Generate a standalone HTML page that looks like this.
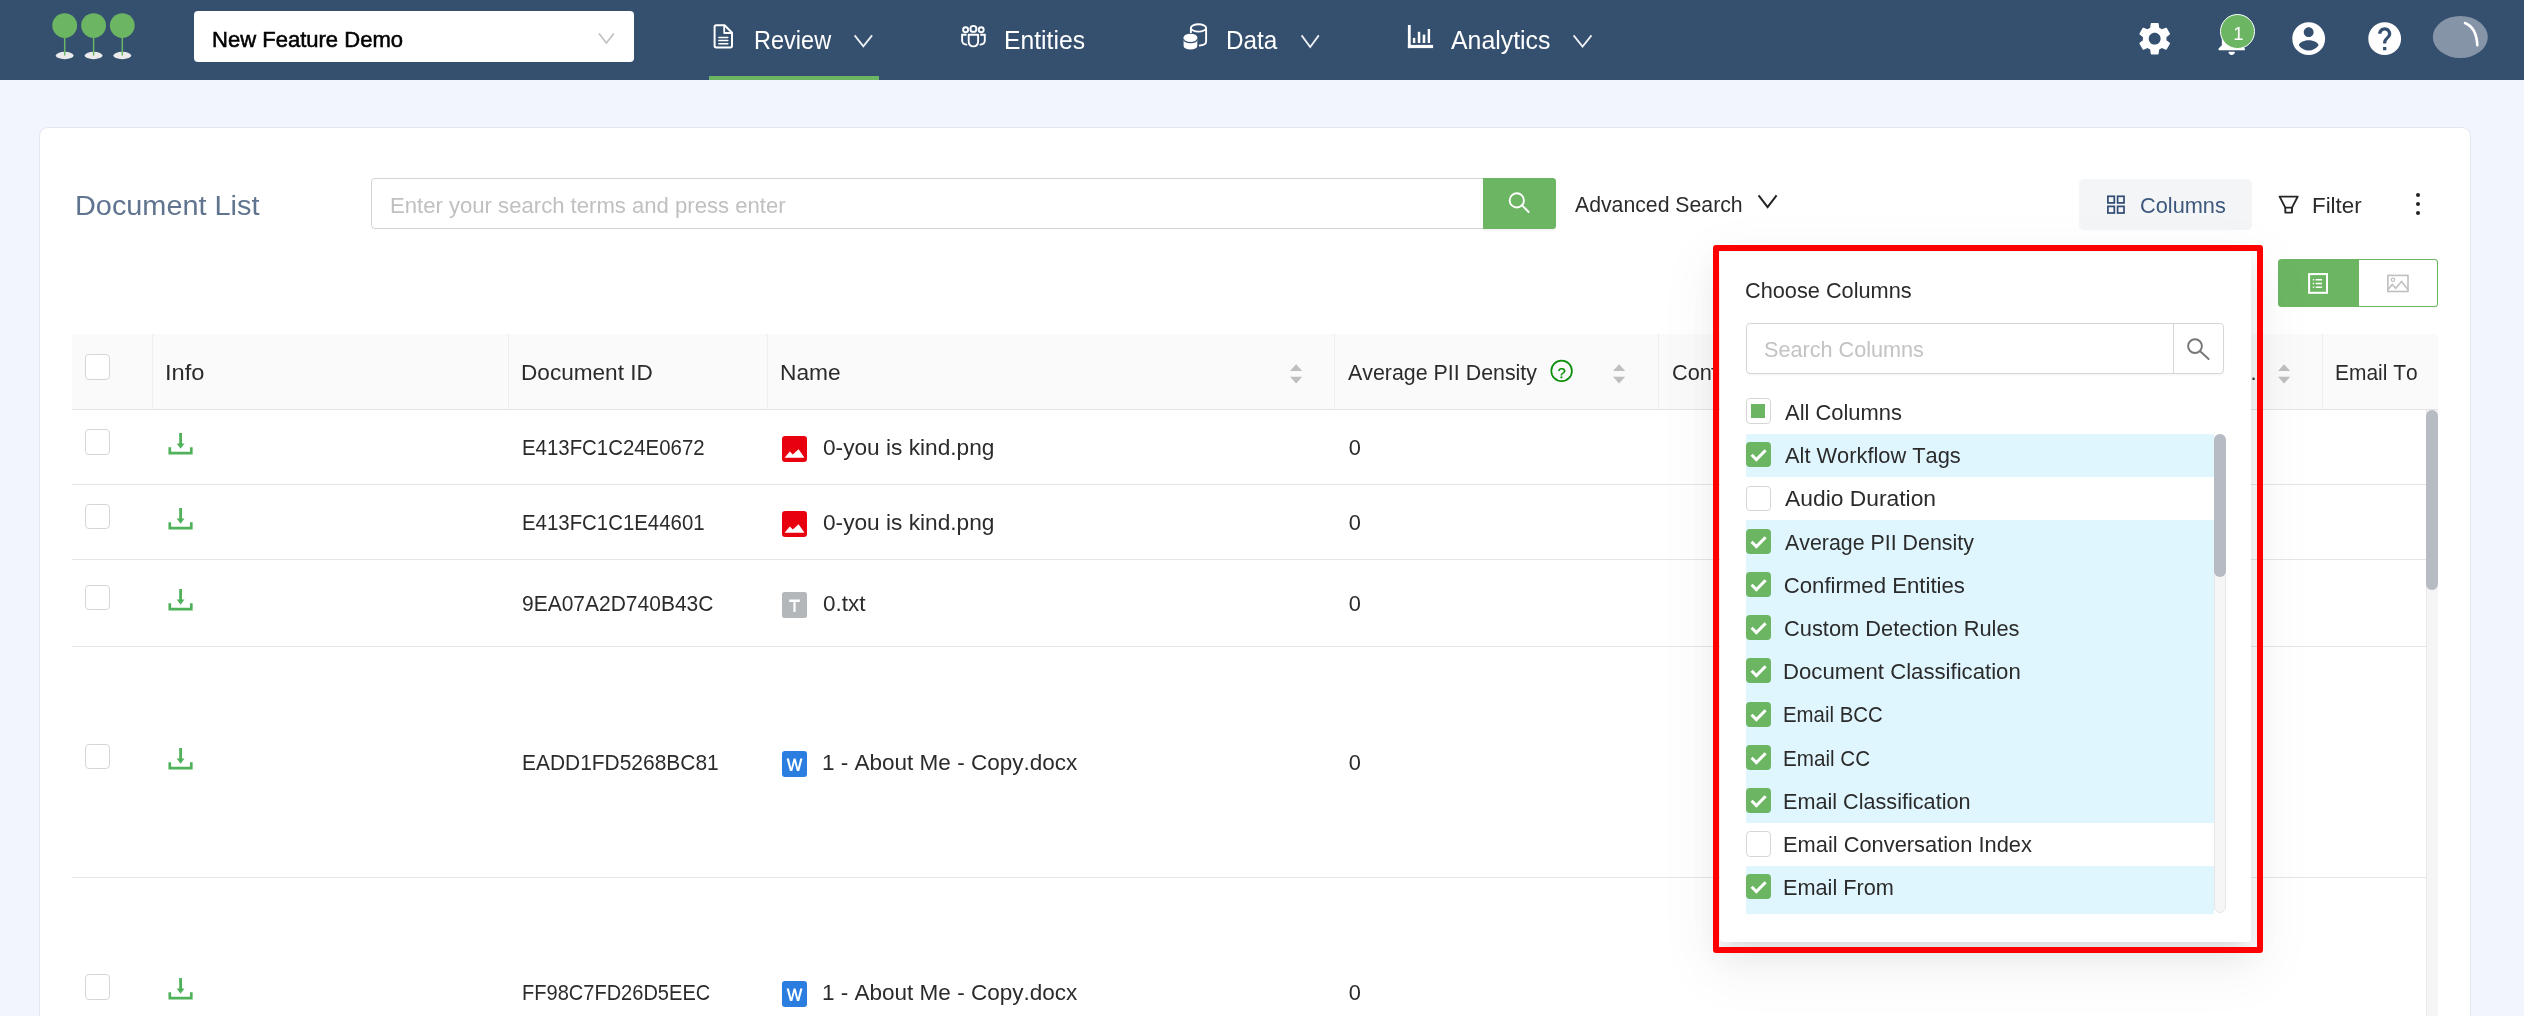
<!DOCTYPE html>
<html><head><meta charset="utf-8"><title>Document List</title>
<style>
html,body{margin:0;padding:0;}
body{width:2524px;height:1016px;overflow:hidden;background:#f2f5fe;position:relative;font-family:"Liberation Sans",sans-serif;font-kerning:none;}
.a{position:absolute;}
.t{position:absolute;white-space:pre;line-height:1;transform-origin:0 0;font-family:"Liberation Sans",sans-serif;}
svg{position:absolute;overflow:visible;}
.cb{position:absolute;width:23px;height:23.6px;border:1px solid #d6d6d6;border-radius:4px;background:#fff;}
.cbk{position:absolute;width:25px;height:25px;border-radius:4px;background:#6cb663;}
.hl{position:absolute;left:0;width:468px;height:43.2px;background:#e0f6fe;}
.rl{position:absolute;left:72px;width:2354px;height:1px;background:#e6e6e6;}
.cs{position:absolute;top:334px;width:1px;height:75px;background:#f2eded;}
</style></head><body><div id="root" style="position:absolute;left:0;top:0;width:2524px;height:1016px;will-change:transform;">

<div class="a" style="left:0;top:0;width:2524px;height:80px;background:#35506f;"></div>
<svg style="left:40px;top:8px" width="110" height="60" viewBox="40 8 110 60"><ellipse cx="64.7" cy="55.5" rx="8.9" ry="3.7" fill="#ebebeb"/><rect x="63.95" y="36" width="1.5" height="19.5" fill="#6cb663"/><circle cx="64.7" cy="25.6" r="12.4" fill="#6cb663"/><ellipse cx="93.6" cy="55.5" rx="8.9" ry="3.7" fill="#ebebeb"/><rect x="92.85" y="36" width="1.5" height="19.5" fill="#6cb663"/><circle cx="93.6" cy="25.6" r="12.4" fill="#6cb663"/><ellipse cx="122.3" cy="55.5" rx="8.9" ry="3.7" fill="#ebebeb"/><rect x="121.55" y="36" width="1.5" height="19.5" fill="#6cb663"/><circle cx="122.3" cy="25.6" r="12.4" fill="#6cb663"/></svg>
<div class="a" style="left:194px;top:11px;width:440px;height:51px;background:#fff;border-radius:4px;"></div>
<span class="t " style="left:212.24px;top:29.17px;font-size:22.6px;color:#000;transform:scaleX(0.9751);-webkit-text-stroke:0.55px #000;">New Feature Demo</span>
<svg style="left:596px;top:30px" width="22" height="18" viewBox="596 30 22 18"><path d="M599 33.6 L606.4 43 L613.8 33.6" fill="none" stroke="#bfbfbf" stroke-width="1.6"/></svg>
<div class="a" style="left:709px;top:76px;width:170px;height:4px;background:#6cb663;"></div>
<svg style="left:712px;top:23px" width="23" height="27" viewBox="712 23 23 27" fill="none" stroke="#fff" stroke-width="2" stroke-linejoin="round" stroke-linecap="round">
<path d="M716.2 25.3 H724.6 L732 32.7 V45.8 Q732 47.4 730.4 47.4 H716.2 Q714.6 47.4 714.6 45.8 V26.9 Q714.6 25.3 716.2 25.3 Z"/>
<path d="M724.2 25.8 V33 H731.5" stroke-width="1.8"/>
<path d="M718.8 37.5 H727.8 M718.8 40.6 H727.8 M718.8 43.7 H727.8" stroke-width="1.5"/>
</svg>
<span class="t " style="left:753.62px;top:27.94px;font-size:25px;color:#fff;transform:scaleX(0.9407);">Review</span>
<svg style="left:850.5px;top:32.3px" width="24.700000000000045" height="18.400000000000006" viewBox="850.5 32.3 24.700000000000045 18.400000000000006"><path d="M854.1 35.699999999999996 L862.85 46.7 L871.6 35.699999999999996" fill="none" stroke="#eef1f5" stroke-width="1.8"/></svg>
<svg style="left:959px;top:23px" width="30" height="28" viewBox="959 23 30 28" fill="none" stroke="#fff" stroke-width="1.9" stroke-linecap="round">
<circle cx="965.6" cy="29.8" r="2.5"/><circle cx="973.4" cy="28.9" r="3"/><circle cx="981.2" cy="29.8" r="2.5"/>
<path d="M968.7 34.7 H978.1 V41.3 Q978.1 46.4 973.4 46.4 Q968.7 46.4 968.7 41.3 Z" stroke-linejoin="round"/>
<path d="M965.8 34.7 H962.1 V40.3 Q962.1 44.4 966.4 44.6"/>
<path d="M981 34.7 H984.8 V40.3 Q984.8 44.4 980.4 44.6"/>
</svg>
<span class="t " style="left:1003.82px;top:27.94px;font-size:25px;color:#fff;transform:scaleX(0.9885);">Entities</span>
<svg style="left:1181px;top:21px" width="30" height="32" viewBox="1181 21 30 32">
<g fill="none" stroke="#fff" stroke-width="1.9">
<ellipse cx="1198.5" cy="27.9" rx="7.6" ry="3.7"/>
<path d="M1206.1 27.9 V41.5 Q1206.1 45.2 1199 45.6"/>
<path d="M1190.9 27.9 V33"/>
</g>
<path d="M1183.6 37.6 V46 A6.85 3.6 0 0 0 1197.3 46 V37.6 Z" fill="#fff"/>
<ellipse cx="1190.45" cy="37.4" rx="6.85" ry="3.6" fill="#fff" stroke="#35506f" stroke-width="0"/>
<path d="M1183.6 39.3 A6.85 3.3 0 0 0 1197.3 39.3" fill="none" stroke="#35506f" stroke-width="1.3"/>
</svg>
<span class="t " style="left:1225.76px;top:27.94px;font-size:25px;color:#fff;transform:scaleX(0.9716);">Data</span>
<svg style="left:1297.6px;top:32px" width="24.40000000000009" height="19" viewBox="1297.6 32 24.40000000000009 19"><path d="M1301.1999999999998 35.4 L1309.8 47 L1318.4 35.4" fill="none" stroke="#eef1f5" stroke-width="1.8"/></svg>
<svg style="left:1406px;top:23px" width="30" height="28" viewBox="1406 23 30 28" fill="#fff">
<rect x="1407.9" y="25" width="2.8" height="23.1"/><rect x="1407.9" y="44.9" width="25.2" height="3.2"/>
<rect x="1412.9" y="37.9" width="2.4" height="5.1"/><rect x="1417.8" y="31.8" width="2.5" height="11.2"/>
<rect x="1422.7" y="34.6" width="2.6" height="8.4"/><rect x="1427.7" y="29" width="2.4" height="14"/>
</svg>
<span class="t " style="left:1451.20px;top:27.94px;font-size:25px;color:#fff;transform:scaleX(0.9943);">Analytics</span>
<svg style="left:1569.9px;top:32.3px" width="25.09999999999991" height="18.6" viewBox="1569.9 32.3 25.09999999999991 18.6"><path d="M1573.5 35.699999999999996 L1582.45 46.9 L1591.4 35.699999999999996" fill="none" stroke="#eef1f5" stroke-width="1.8"/></svg>
<svg style="left:2135.2px;top:18.6px" width="39.4" height="39.4" viewBox="0 0 24 24" fill="#fff"><path d="M19.14 12.94c.04-.3.06-.61.06-.94 0-.32-.02-.64-.07-.94l2.03-1.58c.18-.14.23-.41.12-.61l-1.92-3.32c-.12-.22-.37-.29-.59-.22l-2.39.96c-.5-.38-1.03-.7-1.62-.94l-.36-2.54c-.04-.24-.24-.41-.48-.41h-3.84c-.24 0-.43.17-.47.41l-.36 2.54c-.59.24-1.13.57-1.62.94l-2.39-.96c-.22-.08-.47 0-.59.22L2.74 8.87c-.12.21-.08.47.12.61l2.03 1.58c-.05.3-.09.63-.09.94s.02.64.07.94l-2.03 1.58c-.18.14-.23.41-.12.61l1.92 3.32c.12.22.37.29.59.22l2.39-.96c.5.38 1.03.7 1.62.94l.36 2.54c.05.24.24.41.48.41h3.84c.24 0 .44-.17.47-.41l.36-2.54c.59-.24 1.13-.56 1.62-.94l2.39.96c.22.08.47 0 .59-.22l1.92-3.32c.12-.22.07-.47-.12-.61l-2.01-1.58zM12 15.6c-1.98 0-3.6-1.62-3.6-3.6s1.62-3.6 3.6-3.6 3.6 1.62 3.6 3.6-1.62 3.6-3.6 3.6z"/></svg>
<svg style="left:2211.8px;top:18.6px" width="39.4" height="39.4" viewBox="0 0 24 24" fill="#fff"><path d="M12 22c1.1 0 2-.9 2-2h-4c0 1.1.89 2 2 2zm6-6v-5c0-3.07-1.64-5.64-4.5-6.32V4c0-.83-.67-1.5-1.5-1.5s-1.5.67-1.5 1.5v.68C7.63 5.36 6 7.92 6 11v5l-2 2v1h16v-1l-2-2z"/></svg>
<div class="a" style="left:2220.1px;top:14px;width:33.2px;height:33.2px;border-radius:50%;background:#6cb663;border:1px solid #fff;"></div>
<span class="t " style="left:2233.20px;top:25.06px;font-size:18.6px;color:#fff;transform:scaleX(1.0000);">1</span>
<svg style="left:2288.7px;top:18.6px" width="39.4" height="39.4" viewBox="0 0 24 24" fill="#fff"><path d="M12 2C6.48 2 2 6.48 2 12s4.48 10 10 10 10-4.48 10-10S17.52 2 12 2zm0 3c1.66 0 3 1.34 3 3s-1.34 3-3 3-3-1.34-3-3 1.34-3 3-3zm0 14.2c-2.5 0-4.71-1.28-6-3.22.03-1.99 4-3.08 6-3.08 1.99 0 5.97 1.09 6 3.08-1.29 1.94-3.5 3.22-6 3.22z"/></svg>
<svg style="left:2365.2px;top:18.6px" width="39.4" height="39.4" viewBox="0 0 24 24" fill="#fff"><path d="M12 2C6.48 2 2 6.48 2 12s4.48 10 10 10 10-4.48 10-10S17.52 2 12 2zm1 17h-2v-2h2v2zm2.070-7.750l-.9.92C13.45 12.9 13 13.5 13 15h-2v-.5c0-1.100.45-2.100 1.170-2.830l1.240-1.260c.37-.36.59-.86.59-1.410 0-1.100-.9-2-2-2s-2 .9-2 2H8c0-2.210 1.790-4 4-4s4 1.790 4 4c0 .88-.36 1.680-.93 2.250z"/></svg>
<svg style="left:2430px;top:12px" width="60" height="50" viewBox="2430 12 60 50">
<ellipse cx="2460.3" cy="37" rx="27.5" ry="21" fill="#8694a8"/>
<path d="M2465 23 Q2476.5 27.5 2477.3 45.2" fill="none" stroke="#fff" stroke-width="2.6" stroke-linecap="round"/>
</svg>
<div class="a" style="left:39px;top:126.5px;width:2430px;height:920px;background:#fff;border:1.5px solid #e2e7ef;border-radius:9px;"></div>
<span class="t " style="left:74.69px;top:191.26px;font-size:28.4px;color:#60748f;transform:scaleX(1.0162);">Document List</span>
<div class="a" style="left:371px;top:178px;width:1130px;height:49px;border:1px solid #d4d4d4;border-radius:4px;background:#fff;"></div>
<span class="t " style="left:389.83px;top:194.55px;font-size:21.8px;color:#c0c0c0;transform:scaleX(1.0142);">Enter your search terms and press enter</span>
<div class="a" style="left:1483px;top:178px;width:73px;height:51px;background:#6cb663;border-radius:0 3.5px 3.5px 0;box-shadow:0 2px 1px rgba(0,0,0,0.045);"></div>
<svg style="left:1505px;top:189px" width="30" height="28" viewBox="1505 189 30 28" fill="none" stroke="#fff" stroke-width="1.9" stroke-linecap="round"><circle cx="1516.8" cy="200.4" r="7.1"/><path d="M1521.8 205.2 L1528.6 212"/></svg>
<span class="t " style="left:1574.80px;top:194.26px;font-size:21.9px;color:#2b2b2b;transform:scaleX(0.9703);">Advanced Search</span>
<svg style="left:1754.8px;top:192.4px" width="25.200000000000045" height="19.19999999999999" viewBox="1754.8 192.4 25.200000000000045 19.19999999999999"><path d="M1758.3999999999999 195.8 L1767.4 207.6 L1776.4 195.8" fill="none" stroke="#222" stroke-width="2.0"/></svg>
<div class="a" style="left:2079px;top:179px;width:173px;height:51px;background:#f3f5f7;border-radius:5px;"></div>
<svg style="left:2105px;top:193px" width="24" height="24" viewBox="2105 193 24 24" fill="none" stroke="#2f4b70" stroke-width="1.7"><rect x="2107.9" y="196.3" width="6.4" height="6.6"/><rect x="2117.6" y="196.3" width="6.4" height="6.6"/><rect x="2107.9" y="206.4" width="6.4" height="6.6"/><rect x="2117.6" y="206.4" width="6.4" height="6.6"/></svg>
<span class="t " style="left:2140.11px;top:195.26px;font-size:21.9px;color:#3d587c;transform:scaleX(0.9935);">Columns</span>
<svg style="left:2276px;top:193px" width="26" height="24" viewBox="2276 193 26 24" fill="none" stroke="#262626" stroke-width="1.9" stroke-linejoin="round">
<path d="M2279.6 196.6 H2297.7 L2292 207.6 H2285.3 Z"/><path d="M2285.3 207.6 V212.6 H2292 V207.6"/></svg>
<span class="t " style="left:2311.91px;top:195.26px;font-size:21.9px;color:#2b2b2b;transform:scaleX(1.0198);">Filter</span>
<div class="a" style="left:2416.1px;top:192.5px;width:4.2px;height:4.2px;border-radius:50%;background:#222;"></div>
<div class="a" style="left:2416.1px;top:201.70000000000002px;width:4.2px;height:4.2px;border-radius:50%;background:#222;"></div>
<div class="a" style="left:2416.1px;top:210.8px;width:4.2px;height:4.2px;border-radius:50%;background:#222;"></div>
<div class="a" style="left:2278px;top:259px;width:81px;height:48px;background:#6cb663;border-radius:3.5px 0 0 3.5px;"></div>
<div class="a" style="left:2358.5px;top:259px;width:78.5px;height:46px;background:#fff;border:1px solid #6cb663;border-left:none;border-radius:0 3.5px 3.5px 0;"></div>
<svg style="left:2306px;top:271px" width="24" height="25" viewBox="2306 271 24 25" fill="none" stroke="#fff">
<rect x="2309.1" y="274.1" width="17.9" height="18.7" stroke-width="2"/>
<path d="M2315.6 279.7 H2322 M2315.6 283.4 H2322 M2315.6 287.2 H2322" stroke-width="1.5"/>
<path d="M2312.8 279.7 H2314.2 M2312.8 283.4 H2314.2 M2312.8 287.2 H2314.2" stroke-width="1.5"/>
</svg>
<svg style="left:2385px;top:272px" width="26" height="23" viewBox="2385 272 26 23" fill="none" stroke="#bfbfbf" stroke-width="1.6">
<rect x="2387.9" y="275.4" width="20.1" height="16.1"/>
<circle cx="2393" cy="279.8" r="1.7" stroke-width="1.2"/>
<path d="M2388.2 289.3 L2392.3 284.5 L2395.7 288.3 L2401.5 281.5 L2407.8 289.5" stroke-width="1.5"/>
</svg>
<div class="a" style="left:72px;top:334px;width:2366px;height:75.5px;background:#fafafa;border-radius:4px 4px 0 0;"></div>
<div class="a" style="left:72px;top:409px;width:2366px;height:1px;background:#e4e4e4;"></div>
<div class="cs" style="left:152px;"></div>
<div class="cs" style="left:508px;"></div>
<div class="cs" style="left:767px;"></div>
<div class="cs" style="left:1334px;"></div>
<div class="cs" style="left:1658px;"></div>
<div class="cs" style="left:2322px;"></div>
<span class="t " style="left:164.87px;top:362.36px;font-size:21.9px;color:#2b2b2b;transform:scaleX(1.0815);">Info</span>
<span class="t " style="left:521.09px;top:362.36px;font-size:21.9px;color:#2b2b2b;transform:scaleX(1.0319);">Document ID</span>
<span class="t " style="left:780.18px;top:362.36px;font-size:21.9px;color:#2b2b2b;transform:scaleX(1.0393);">Name</span>
<span class="t " style="left:1348.40px;top:362.36px;font-size:21.9px;color:#2b2b2b;transform:scaleX(0.9770);">Average PII Density</span>
<div class="a" style="left:1660px;top:340px;width:53px;height:60px;overflow:hidden;">
<span class="t " style="left:11.61px;top:22.36px;font-size:21.9px;color:#2b2b2b;transform:scaleX(0.9924);">Con</span>
<span class="t " style="left:51.39px;top:22.36px;font-size:21.9px;color:#2b2b2b;transform:scaleX(1.1189);">fi</span>
</div>
<span class="t " style="left:2334.82px;top:362.36px;font-size:21.9px;color:#2b2b2b;transform:scaleX(0.9564);">Email To</span>
<span class="t " style="left:2250.43px;top:362.36px;font-size:21.9px;color:#2b2b2b;transform:scaleX(1.0000);">.</span>
<svg style="left:1288.7px;top:362px" width="15" height="24" viewBox="1288.7 362 15 24" fill="#bfbfbf"><path d="M1289.7 370.9 L1295.8 364.2 L1301.9 370.9 Z"/><path d="M1289.7 376.8 L1295.8 383.6 L1301.9 376.8 Z"/></svg>
<svg style="left:1612.4px;top:362px" width="15" height="24" viewBox="1612.4 362 15 24" fill="#bfbfbf"><path d="M1613.4 370.9 L1619.5 364.2 L1625.6000000000001 370.9 Z"/><path d="M1613.4 376.8 L1619.5 383.6 L1625.6000000000001 376.8 Z"/></svg>
<svg style="left:2276.8px;top:362px" width="15" height="24" viewBox="2276.8 362 15 24" fill="#bfbfbf"><path d="M2277.8 370.9 L2283.9 364.2 L2290.0 370.9 Z"/><path d="M2277.8 376.8 L2283.9 383.6 L2290.0 376.8 Z"/></svg>
<svg style="left:1548px;top:358px" width="28" height="28" viewBox="1548 358 28 28"><circle cx="1561.6" cy="370.9" r="10.3" fill="none" stroke="#0a8f08" stroke-width="1.7"/></svg>
<span class="t " style="left:1557.50px;top:364.80px;font-size:15px;color:#0a8f08;transform:scaleX(1.0000);-webkit-text-stroke:0.25px #0a8f08;">?</span>
<div class="cb" style="left:85px;top:354.1px;"></div>
<div class="rl" style="top:484px;"></div>
<div class="rl" style="top:559px;"></div>
<div class="rl" style="top:646px;"></div>
<div class="rl" style="top:877px;"></div>
<div class="cb" style="left:85px;top:429.2px;"></div>
<svg style="left:166px;top:431.3px" width="30" height="27" viewBox="166 431.3 30 27"><path d="M169.8 447.5 V453.5 H191.3 V447.5" fill="none" stroke="#4fb25a" stroke-width="2.7"/><rect x="179.2" y="433.3" width="2.8" height="11" fill="#4fb25a"/><path d="M176.7 443.7 H184.5 L180.6 449.0 Z" fill="#4fb25a"/></svg>
<span class="t " style="left:521.67px;top:436.95px;font-size:21.8px;color:#2b2b2b;transform:scaleX(0.9359);">E413FC1C24E0672</span>
<svg style="left:782px;top:436.1px" width="25" height="26" viewBox="0 0 25 26"><rect x="0" y="0" width="25" height="26" rx="3.2" fill="#e9000f"/><path d="M2.6 21.7 L7.8 15.6 L10.8 18.5 L16.6 13.3 L22.5 21.7 Z" fill="#fff"/></svg>
<span class="t " style="left:822.95px;top:436.95px;font-size:21.8px;color:#2b2b2b;transform:scaleX(1.0405);">0-you is kind.png</span>
<span class="t " style="left:1348.78px;top:436.95px;font-size:21.8px;color:#2b2b2b;transform:scaleX(1.0000);">0</span>
<div class="cb" style="left:85px;top:503.9px;"></div>
<svg style="left:166px;top:505.99999999999994px" width="30" height="27" viewBox="166 505.99999999999994 30 27"><path d="M169.8 522.1999999999999 V528.1999999999999 H191.3 V522.1999999999999" fill="none" stroke="#4fb25a" stroke-width="2.7"/><rect x="179.2" y="507.99999999999994" width="2.8" height="11" fill="#4fb25a"/><path d="M176.7 518.4 H184.5 L180.6 523.6999999999999 Z" fill="#4fb25a"/></svg>
<span class="t " style="left:521.67px;top:511.65px;font-size:21.8px;color:#2b2b2b;transform:scaleX(0.9359);">E413FC1C1E44601</span>
<svg style="left:782px;top:510.8px" width="25" height="26" viewBox="0 0 25 26"><rect x="0" y="0" width="25" height="26" rx="3.2" fill="#e9000f"/><path d="M2.6 21.7 L7.8 15.6 L10.8 18.5 L16.6 13.3 L22.5 21.7 Z" fill="#fff"/></svg>
<span class="t " style="left:822.95px;top:511.65px;font-size:21.8px;color:#2b2b2b;transform:scaleX(1.0405);">0-you is kind.png</span>
<span class="t " style="left:1348.78px;top:511.65px;font-size:21.8px;color:#2b2b2b;transform:scaleX(1.0000);">0</span>
<div class="cb" style="left:85px;top:584.9px;"></div>
<svg style="left:166px;top:587.0px" width="30" height="27" viewBox="166 587.0 30 27"><path d="M169.8 603.2 V609.2 H191.3 V603.2" fill="none" stroke="#4fb25a" stroke-width="2.7"/><rect x="179.2" y="589.0" width="2.8" height="11" fill="#4fb25a"/><path d="M176.7 599.4 H184.5 L180.6 604.7 Z" fill="#4fb25a"/></svg>
<span class="t " style="left:522.36px;top:592.65px;font-size:21.8px;color:#2b2b2b;transform:scaleX(0.9631);">9EA07A2D740B43C</span>
<svg style="left:782px;top:591.8000000000001px" width="25" height="26" viewBox="0 0 25 26"><rect x="0" y="0" width="25" height="26" rx="2.5" fill="#b4b7ba"/><path d="M7.2 7.6 H17.8 V9.9 H13.6 V20 H11.4 V9.9 H7.2 Z" fill="#fff"/></svg>
<span class="t " style="left:822.96px;top:592.65px;font-size:21.8px;color:#2b2b2b;transform:scaleX(1.0308);">0.txt</span>
<span class="t " style="left:1348.78px;top:592.65px;font-size:21.8px;color:#2b2b2b;transform:scaleX(1.0000);">0</span>
<div class="cb" style="left:85px;top:743.9px;"></div>
<svg style="left:166px;top:746.0px" width="30" height="27" viewBox="166 746.0 30 27"><path d="M169.8 762.2 V768.2 H191.3 V762.2" fill="none" stroke="#4fb25a" stroke-width="2.7"/><rect x="179.2" y="748.0" width="2.8" height="11" fill="#4fb25a"/><path d="M176.7 758.4 H184.5 L180.6 763.7 Z" fill="#4fb25a"/></svg>
<span class="t " style="left:521.62px;top:751.65px;font-size:21.8px;color:#2b2b2b;transform:scaleX(0.9605);">EADD1FD5268BC81</span>
<svg style="left:782px;top:750.8000000000001px" width="25" height="26" viewBox="0 0 25 26"><rect x="0" y="0" width="25" height="26" rx="3" fill="#2b7de0"/><path d="M4.6 7.6 H6.9 L9.2 17 L11.6 7.6 H13.6 L16 17 L18.2 7.6 H20.5 L17.2 20 H14.9 L12.6 11.2 L10.3 20 H8 Z" fill="#fff"/></svg>
<span class="t " style="left:822.11px;top:751.65px;font-size:21.8px;color:#2b2b2b;transform:scaleX(1.0329);">1 - About Me - Copy.docx</span>
<span class="t " style="left:1348.78px;top:751.65px;font-size:21.8px;color:#2b2b2b;transform:scaleX(1.0000);">0</span>
<div class="cb" style="left:85px;top:974.2px;"></div>
<svg style="left:166px;top:976.3px" width="30" height="27" viewBox="166 976.3 30 27"><path d="M169.8 992.5 V998.5 H191.3 V992.5" fill="none" stroke="#4fb25a" stroke-width="2.7"/><rect x="179.2" y="978.3" width="2.8" height="11" fill="#4fb25a"/><path d="M176.7 988.6999999999999 H184.5 L180.6 994.0 Z" fill="#4fb25a"/></svg>
<span class="t " style="left:521.70px;top:981.95px;font-size:21.8px;color:#2b2b2b;transform:scaleX(0.9194);">FF98C7FD26D5EEC</span>
<svg style="left:782px;top:981.1px" width="25" height="26" viewBox="0 0 25 26"><rect x="0" y="0" width="25" height="26" rx="3" fill="#2b7de0"/><path d="M4.6 7.6 H6.9 L9.2 17 L11.6 7.6 H13.6 L16 17 L18.2 7.6 H20.5 L17.2 20 H14.9 L12.6 11.2 L10.3 20 H8 Z" fill="#fff"/></svg>
<span class="t " style="left:822.11px;top:981.95px;font-size:21.8px;color:#2b2b2b;transform:scaleX(1.0329);">1 - About Me - Copy.docx</span>
<span class="t " style="left:1348.78px;top:981.95px;font-size:21.8px;color:#2b2b2b;transform:scaleX(1.0000);">0</span>
<div class="a" style="left:2426px;top:410px;width:12px;height:640px;background:#f5f5f5;border-left:1px solid #e8e8e8;box-sizing:border-box;"></div>
<div class="a" style="left:2426px;top:410px;width:12px;height:180px;background:#b7bbc3;border-radius:6px;"></div>
<div class="a" style="left:1720px;top:252px;width:531px;height:690px;background:#fff;border-radius:4px;box-shadow:0 6px 12px -8px rgba(0,0,0,0.11),0 12px 32px 0 rgba(0,0,0,0.07),0 18px 56px 16px rgba(0,0,0,0.045);"></div>
<span class="t " style="left:1744.81px;top:280.31px;font-size:22.2px;color:#2b2b2b;transform:scaleX(0.9792);">Choose Columns</span>
<div class="a" style="left:1746px;top:323px;width:476px;height:49px;border:1px solid #d6d6d6;border-radius:4px;background:#fff;box-shadow:0 2px 2px rgba(0,0,0,0.03);"></div>
<div class="a" style="left:2173px;top:324px;width:1px;height:49px;background:#d6d6d6;"></div>
<span class="t " style="left:1763.93px;top:339.31px;font-size:22.2px;color:#c3c3c3;transform:scaleX(0.9745);">Search Columns</span>
<svg style="left:2184px;top:335px" width="30" height="28" viewBox="2184 335 30 28" fill="none" stroke="#767676" stroke-width="1.9" stroke-linecap="round"><circle cx="2195" cy="346.1" r="6.9"/><path d="M2200.2 351.3 L2208.6 359"/></svg>
<div class="cb" style="left:1746px;top:398.2px;"></div>
<div class="a" style="left:1751.4px;top:404.2px;width:14px;height:14px;background:#6cb663;"></div>
<span class="t " style="left:1784.60px;top:402.01px;font-size:22.2px;color:#2b2b2b;transform:scaleX(0.9884);">All Columns</span>
<div class="a" style="left:1746px;top:434px;width:480px;height:480px;overflow:hidden;">
<div class="hl" style="top:0px;height:43px;"></div>
<div class="cbk" style="left:0;top:8.3px;"></div>
<svg style="left:0;top:8.3px" width="25" height="25" viewBox="0 0 25 25"><path d="M5.6 12.7 L10.4 17.6 L19.6 8.2" fill="none" stroke="#fff" stroke-width="3"/></svg>
<span class="t " style="left:38.80px;top:11.11px;font-size:22.2px;color:#2b2b2b;transform:scaleX(0.9832);">Alt Workflow Tags</span>
<div class="cb" style="left:0;top:51.8px;"></div>
<span class="t " style="left:38.80px;top:54.31px;font-size:22.2px;color:#2b2b2b;transform:scaleX(1.0292);">Audio Duration</span>
<div class="hl" style="top:86px;height:44px;"></div>
<div class="cbk" style="left:0;top:94.7px;"></div>
<svg style="left:0;top:94.7px" width="25" height="25" viewBox="0 0 25 25"><path d="M5.6 12.7 L10.4 17.6 L19.6 8.2" fill="none" stroke="#fff" stroke-width="3"/></svg>
<span class="t " style="left:38.80px;top:97.51px;font-size:22.2px;color:#2b2b2b;transform:scaleX(0.9633);">Average PII Density</span>
<div class="hl" style="top:130px;height:43px;"></div>
<div class="cbk" style="left:0;top:137.9px;"></div>
<svg style="left:0;top:137.9px" width="25" height="25" viewBox="0 0 25 25"><path d="M5.6 12.7 L10.4 17.6 L19.6 8.2" fill="none" stroke="#fff" stroke-width="3"/></svg>
<span class="t " style="left:37.69px;top:140.71px;font-size:22.2px;color:#2b2b2b;transform:scaleX(1.0000);">Confirmed Entities</span>
<div class="hl" style="top:173px;height:43px;"></div>
<div class="cbk" style="left:0;top:181.1px;"></div>
<svg style="left:0;top:181.1px" width="25" height="25" viewBox="0 0 25 25"><path d="M5.6 12.7 L10.4 17.6 L19.6 8.2" fill="none" stroke="#fff" stroke-width="3"/></svg>
<span class="t " style="left:37.71px;top:183.91px;font-size:22.2px;color:#2b2b2b;transform:scaleX(0.9845);">Custom Detection Rules</span>
<div class="hl" style="top:216px;height:43px;"></div>
<div class="cbk" style="left:0;top:224.3px;"></div>
<svg style="left:0;top:224.3px" width="25" height="25" viewBox="0 0 25 25"><path d="M5.6 12.7 L10.4 17.6 L19.6 8.2" fill="none" stroke="#fff" stroke-width="3"/></svg>
<span class="t " style="left:37.03px;top:227.11px;font-size:22.2px;color:#2b2b2b;transform:scaleX(0.9989);">Document Classification</span>
<div class="hl" style="top:259px;height:43px;"></div>
<div class="cbk" style="left:0;top:267.5px;"></div>
<svg style="left:0;top:267.5px" width="25" height="25" viewBox="0 0 25 25"><path d="M5.6 12.7 L10.4 17.6 L19.6 8.2" fill="none" stroke="#fff" stroke-width="3"/></svg>
<span class="t " style="left:37.17px;top:270.31px;font-size:22.2px;color:#2b2b2b;transform:scaleX(0.9193);">Email BCC</span>
<div class="hl" style="top:302px;height:44px;"></div>
<div class="cbk" style="left:0;top:310.7px;"></div>
<svg style="left:0;top:310.7px" width="25" height="25" viewBox="0 0 25 25"><path d="M5.6 12.7 L10.4 17.6 L19.6 8.2" fill="none" stroke="#fff" stroke-width="3"/></svg>
<span class="t " style="left:37.15px;top:313.51px;font-size:22.2px;color:#2b2b2b;transform:scaleX(0.9293);">Email CC</span>
<div class="hl" style="top:346px;height:43px;"></div>
<div class="cbk" style="left:0;top:353.9px;"></div>
<svg style="left:0;top:353.9px" width="25" height="25" viewBox="0 0 25 25"><path d="M5.6 12.7 L10.4 17.6 L19.6 8.2" fill="none" stroke="#fff" stroke-width="3"/></svg>
<span class="t " style="left:37.07px;top:356.71px;font-size:22.2px;color:#2b2b2b;transform:scaleX(0.9748);">Email Classification</span>
<div class="cb" style="left:0;top:397.4px;"></div>
<span class="t " style="left:37.05px;top:399.91px;font-size:22.2px;color:#2b2b2b;transform:scaleX(0.9846);">Email Conversation Index</span>
<div class="hl" style="top:432px;height:43px;"></div>
<div class="cbk" style="left:0;top:440.3px;"></div>
<svg style="left:0;top:440.3px" width="25" height="25" viewBox="0 0 25 25"><path d="M5.6 12.7 L10.4 17.6 L19.6 8.2" fill="none" stroke="#fff" stroke-width="3"/></svg>
<span class="t " style="left:37.06px;top:443.11px;font-size:22.2px;color:#2b2b2b;transform:scaleX(0.9778);">Email From</span>
<div class="hl" style="top:475px;height:43px;"></div>
<div class="cbk" style="left:0;top:483.5px;"></div>
<svg style="left:0;top:483.5px" width="25" height="25" viewBox="0 0 25 25"><path d="M5.6 12.7 L10.4 17.6 L19.6 8.2" fill="none" stroke="#fff" stroke-width="3"/></svg>
<span class="t " style="left:37.05px;top:486.31px;font-size:22.2px;color:#2b2b2b;transform:scaleX(0.9870);">Email Has Attachments</span>
<div class="a" style="left:468.4px;top:0;width:11.4px;height:479.4px;background:#f6f6f6;border:1px solid #e6e6e6;box-sizing:border-box;border-radius:6px;"></div>
<div class="a" style="left:468.4px;top:0;width:11.4px;height:143px;background:#b7bbc3;border-radius:6px;"></div>
</div>
<div class="a" style="left:1713px;top:245px;width:538px;height:696px;border:6px solid #ff0000;border-radius:3px;"></div>
</div></body></html>
